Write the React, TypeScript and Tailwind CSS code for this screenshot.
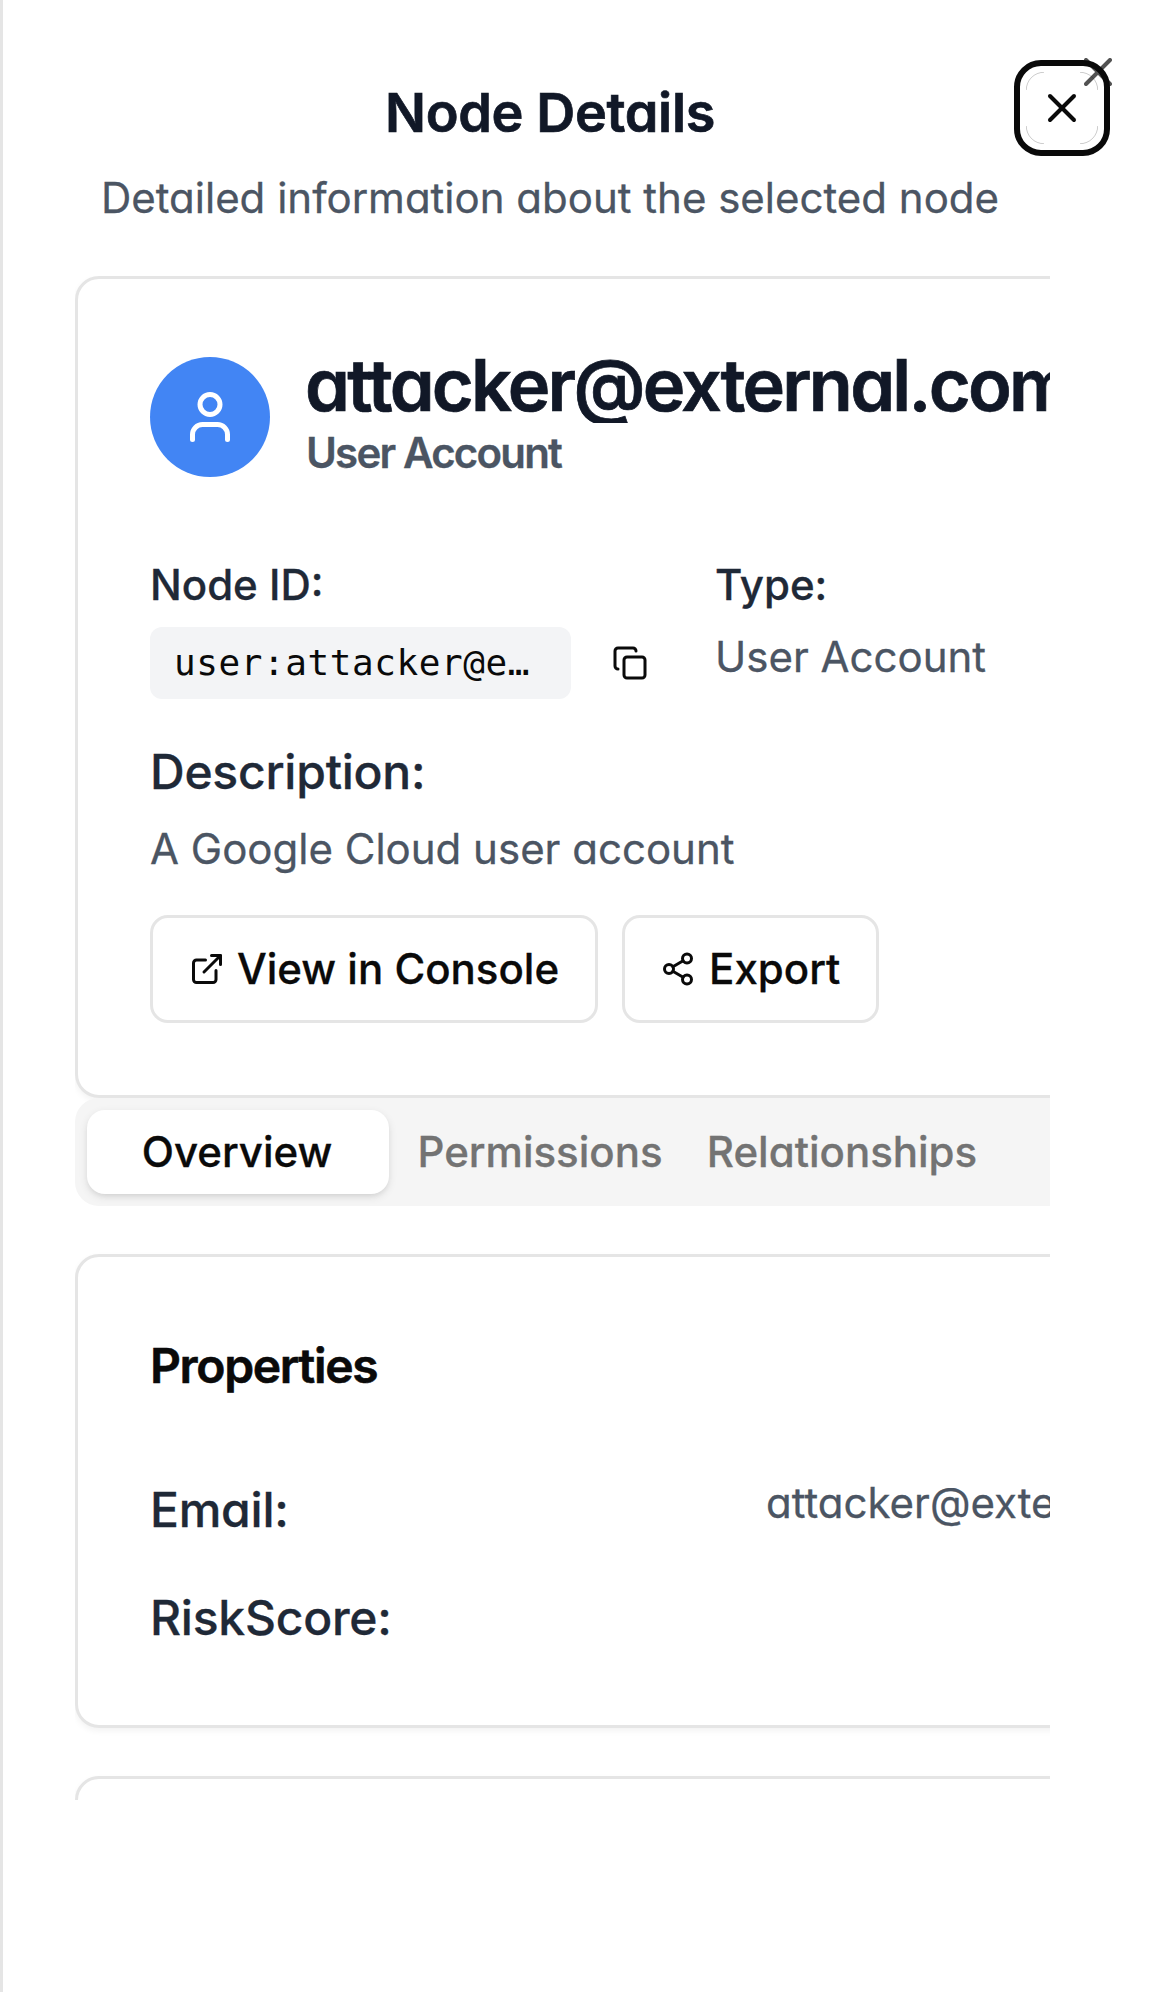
import React from 'react';
import { Copy, ExternalLink, Share2, User, X } from 'lucide-react';

const card = 'w-[1140px] rounded-[24px] border-[3px] border-[#e5e5e5] bg-white p-[72px] shadow-[0_3px_6px_0_rgba(0,0,0,0.05)]';
const outline = 'flex h-[108px] items-center gap-3 rounded-[18px] border-[3px] border-[#e5e5e5] bg-white px-9 text-[42px] leading-[60px] font-medium';
const fieldLabel = 'h-[72px] text-[48px] leading-[74px] font-medium tracking-[-0.24px] text-[#1f2937]';

function Tab({ label, active = false }: { label: string; active?: boolean }) {
  return (
    <button
      className={
        active
          ? 'flex h-[84px] w-[302px] items-center justify-center rounded-[18px] bg-white pr-0.5 text-[#0a0a0a] shadow-[0_3px_9px_0_rgba(0,0,0,0.1),0_3px_6px_-3px_rgba(0,0,0,0.1)]'
          : 'flex h-[84px] w-[302px] items-center justify-center rounded-[18px] text-[#737373]'
      }
    >
      {label}
    </button>
  );
}

export default function App() {
  return (
    <div className="relative h-[1992px] w-[1170px] overflow-hidden border-l-[3px] border-[#e5e5e5] bg-white pt-[85px] pl-[72px] font-['Inter',sans-serif] text-[#0a0a0a] antialiased [-webkit-text-stroke-width:0.3px] [font-feature-settings:'cv11']">
      <header className="flex w-[950px] flex-col items-center whitespace-nowrap">
        <h2 className="h-[54px] text-[54px] leading-[56px] font-semibold tracking-[-0.35px] text-[#111827] [-webkit-text-stroke-width:0.7px]">Node Details</h2>
        <p className="mt-[29px] text-[42px] leading-[60px] text-[#4b5563]">Detailed information about the selected node</p>
      </header>

      <main className="mt-12 h-[1524px] w-[975px] overflow-hidden whitespace-nowrap">
        <section className={card}>
          <div className="flex items-center gap-9">
            <div className="flex size-[120px] shrink-0 items-center justify-center rounded-full bg-[#4285f4] text-white">
              <User size={60} />
            </div>
            <div>
              <h3 className="-ml-px h-[72px] overflow-hidden text-[72px] leading-[68px] font-semibold tracking-[-2.72px] text-[#111827] [-webkit-text-stroke-width:0.7px]">attacker@external.com</h3>
              <p className="text-[42px] leading-[60px] font-semibold tracking-[-1.8px] text-[#4b5563]">User Account</p>
            </div>
          </div>

          <div className="mt-[72px] flex">
            <div className="w-[565px]">
              <div className="text-[42px] leading-[60px] font-medium text-[#1f2937]">Node ID:</div>
              <div className="mt-3 flex items-center">
                <code className="h-[72px] w-[421px] rounded-[12px] bg-[#f3f4f6] px-6 font-['DejaVu_Sans_Mono',monospace] text-[36px] leading-[72px] tracking-[0.57px] [-webkit-text-stroke-width:0px]">user:attacker@e…</code>
                <button className="ml-[41px]" aria-label="Copy"><Copy size={36} /></button>
              </div>
            </div>
            <div>
              <div className="text-[42px] leading-[60px] font-medium text-[#1f2937]">Type:</div>
              <div className="mt-3 text-[42px] leading-[60px] text-[#4b5563]">User Account</div>
            </div>
          </div>

          <h4 className={fieldLabel + ' mt-9'}>Description:</h4>
          <p className="mt-3 text-[42px] leading-[60px] text-[#4b5563]">A Google Cloud user account</p>
          <div className="mt-9 flex gap-6">
            <button className={outline}><ExternalLink size={36} />View in Console</button>
            <button className={outline}><Share2 size={36} className="mr-px -ml-px" />Export</button>
          </div>
        </section>

        <nav className="flex h-[108px] w-[1140px] rounded-[24px] bg-[#f5f5f5] p-3 text-[42px] leading-[60px] font-medium">
          <Tab label="Overview" active />
          <Tab label="Permissions" />
          <Tab label="Relationships" />
        </nav>

        <section className={card + ' mt-12'}>
          <h3 className="h-[72px] text-[48px] leading-[74px] font-semibold tracking-[-1.35px] [-webkit-text-stroke-width:0.6px]">Properties</h3>
          <div className="mt-[72px] flex items-start">
            <div className={fieldLabel + ' w-[616px] shrink-0'}>Email:</div>
            <div className="text-[42px] leading-[60px] text-[#4b5563]">attacker@external.com</div>
          </div>
          <div className={fieldLabel + ' mt-9'}>RiskScore:</div>
        </section>

        <section className={card + ' mt-12'} />
      </main>

      <button aria-label="Close" className="absolute top-[60px] left-[1011px] flex size-24 items-center justify-center rounded-[27px] border-[6px] border-[#0a0a0a] bg-white">
        <svg className="absolute top-1.5 left-1.5" width="72" height="72" fill="none" stroke="#0a0a0a" strokeOpacity="0.35" strokeWidth="0.6">
          <path d="M0.3 18A17.7 17.7 0 0 1 18 0.3M54 0.3A17.7 17.7 0 0 1 71.7 18M71.7 54A17.7 17.7 0 0 1 54 71.7M18 71.7A17.7 17.7 0 0 1 0.3 54" />
        </svg>
        <X size={48} />
      </button>
      <X size={48} className="absolute top-12 left-[1071px] opacity-70" />
    </div>
  );
}
